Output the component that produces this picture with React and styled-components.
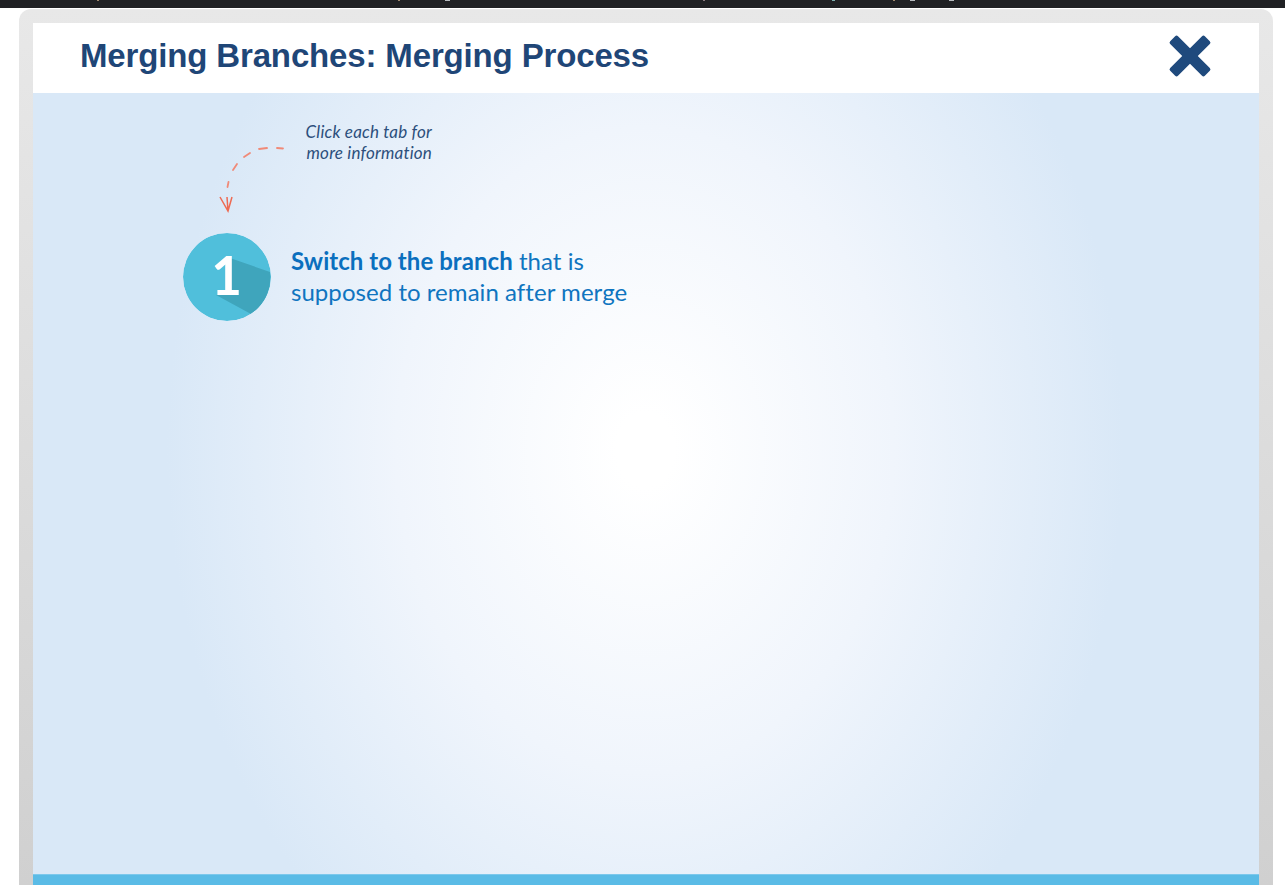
import React from "react";
import styled, { createGlobalStyle } from "styled-components";

const GlobalStyle = createGlobalStyle`
  html, body {
    margin: 0;
    padding: 0;
    height: 885px;
    overflow: hidden;
    background: #fff;
  }
`;

const clippedText = [
  { gap: 97, width: 2, color: "#a08a70" },
  { gap: 299, width: 2, color: "#a08a70" },
  { gap: 45, width: 5, color: "#b8bcc0" },
  { gap: 253, width: 2, color: "#8a7a80" },
  { gap: 127, width: 3, color: "#7fb0b0" },
  { gap: 58, width: 2, color: "#a08a70" },
  { gap: 15, width: 5, color: "#b8bcc0" },
  { gap: 34, width: 5, color: "#b8bcc0" },
];

const App = () => {
  return (
    <Page>
      <GlobalStyle />
      <TopBar>
        {clippedText.map((tick, i) => (
          <Tick key={i} $gap={tick.gap} $width={tick.width} $color={tick.color} />
        ))}
      </TopBar>
      <Frame>
        <Panel>
          <Header>
            <Title>Merging Branches: Merging Process</Title>
            <CloseIcon viewBox="0 0 44 44" aria-label="Close">
              <g fill="#1f4a7d" transform="rotate(45 22 22)">
                <rect x="-2.5" y="16.5" width="49" height="11" rx="2" />
                <rect x="16.5" y="-2.5" width="11" height="49" rx="2" />
              </g>
            </CloseIcon>
          </Header>
          <Body>
            <Hint>
              <HintArrow viewBox="0 0 70 70">
                <g fill="none" stroke="#f08a78" strokeWidth="1.8" strokeLinecap="round">
                  <path d="M66 5.5 L60 5" />
                  <path d="M50 5 L42 6" />
                  <path d="M33 10 L27 14" />
                  <path d="M20 21 L16 27" />
                  <path d="M11.5 39 L10.5 44" />
                </g>
                <path d="M3 54 L11 68 L15 54 M10 54 L11 68" fill="none" stroke="#ee6a52" strokeWidth="1.5" />
              </HintArrow>
              <HintText>
                Click each tab for
                <br />
                more information
              </HintText>
            </Hint>
            <Step>
              <StepBadge>
                <svg viewBox="0 0 88 88" width="88" height="88">
                  <circle cx="44" cy="44" r="44" fill="#50bfdb" />
                  <path d="M44 24 L87 39 A44 44 0 0 1 68 81 L33 62 L44 62 Z" fill="#3fa5bc" />
                  <text x="43.5" y="62" textAnchor="middle" fontFamily="Lato" fontWeight="700" fontSize="53" fill="#fff">
                    1
                  </text>
                </svg>
              </StepBadge>
              <StepText>
                <strong>Switch to the branch</strong> that is
                <br />
                supposed to remain after merge
              </StepText>
            </Step>
          </Body>
          <Footer />
        </Panel>
      </Frame>
    </Page>
  );
};

const Page = styled.div`
  width: 1285px;
  height: 885px;
  overflow: hidden;
  background: #fff;
`;

const TopBar = styled.div`
  height: 8px;
  background: #202124;
  display: flex;
  align-items: flex-start;
`;

const Tick = styled.span`
  height: 1px;
  flex: none;
  width: ${(p) => p.$width}px;
  margin-left: ${(p) => p.$gap}px;
  background: ${(p) => p.$color};
`;

const Frame = styled.div`
  margin: 1px 12px 0 19px;
  padding: 14px 14px 0;
  height: 876px;
  box-sizing: border-box;
  border-radius: 12px 12px 0 0;
  background: linear-gradient(#e8e8e8, #d0d0d0);
`;

const Panel = styled.div`
  height: 100%;
  display: flex;
  flex-direction: column;
`;

const Header = styled.header`
  height: 70px;
  box-sizing: border-box;
  flex: none;
  background: #fff;
  display: flex;
  align-items: center;
  justify-content: space-between;
  padding: 0 47px 4px;
`;

const Title = styled.h1`
  margin: 0;
  font-family: "Liberation Sans", Arial, sans-serif;
  font-size: 33px;
  letter-spacing: -0.15px;
  font-weight: 700;
  color: #1f4677;
`;

const CloseIcon = styled.svg`
  width: 44px;
  height: 44px;
`;

const Body = styled.main`
  flex: 1;
  padding: 28px 0 0 150px;
  background: radial-gradient(ellipse 478px 620px at 612px 357px, #fff 0%, #fff 6%, #f0f5fc 52%, #d9e8f7 100%);
`;

const Hint = styled.div`
  display: flex;
  align-items: flex-start;
  margin-left: 34px;
  height: 112px;
`;

const HintArrow = styled.svg`
  width: 70px;
  height: 70px;
  margin-top: 22px;
`;

const HintText = styled.p`
  margin: 0 0 0 17px;
  width: 128px;
  text-align: right;
  font-family: Lato, sans-serif;
  font-style: italic;
  font-size: 17px;
  letter-spacing: 0.2px;
  line-height: 21px;
  white-space: nowrap;
  color: #2c4f7c;
`;

const Step = styled.section`
  display: flex;
  align-items: center;
  gap: 20px;
`;

const StepBadge = styled.div`
  width: 88px;
  height: 88px;
  flex: none;
  border-radius: 50%;
  overflow: hidden;
`;

const StepText = styled.p`
  margin: 0;
  padding-bottom: 2px;
  font-family: Lato, sans-serif;
  font-size: 24px;
  letter-spacing: 0.05px;
  line-height: 31px;
  color: #0f75c0;

  strong {
    font-weight: 700;
    color: #0b6fbe;
  }
`;

const Footer = styled.footer`
  height: 11px;
  box-sizing: border-box;
  flex: none;
  background: #5abbe6;
  border-top: 1px solid #7cc8ec;
`;

export default App;
